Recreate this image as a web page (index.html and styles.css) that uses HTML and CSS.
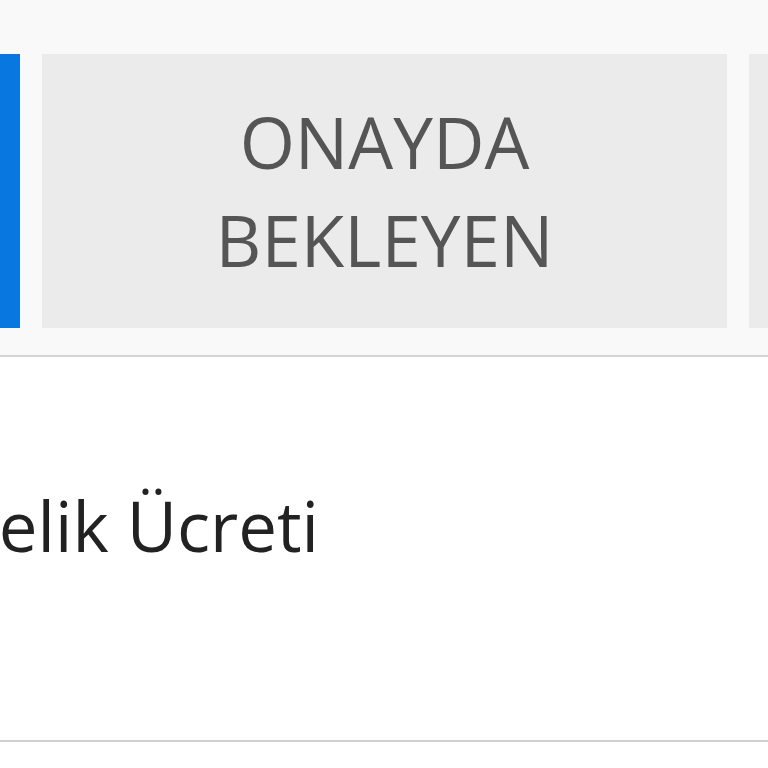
FILE: index.html
```html
<!DOCTYPE html>
<html lang="tr">
<head>
<meta charset="utf-8">
<title>Üyelik</title>
<link rel="stylesheet" href="styles.css">
</head>
<body>
<div class="tabs-area">
  <div class="tabs">
    <div class="tab tab-active">Onaylanan</div>
    <div class="tab">Onayda<br>Bekleyen</div>
    <div class="tab">Reddedilen</div>
  </div>
</div>
<div class="row">
  <span class="row-title">Üyelik Ücreti</span>
</div>
</body>
</html>
```
FILE: styles.css
```css
html, body {
  margin: 0;
  padding: 0;
  background: #ffffff;
  overflow: hidden;
  font-family: "Open Sans", "Noto Sans", sans-serif;
}
.tabs-area {
  background: #f9f9f9;
  padding: 54px 0 27px;
  border-bottom: 2px solid #d4d4d4;
}
.tabs {
  display: flex;
  gap: 22px;
  margin-left: -665px;
}
.tab {
  flex: none;
  width: 685px;
  height: 274px;
  background: #ebebeb;
  color: #555555;
  font-size: 71px;
  line-height: 98px;
  text-transform: uppercase;
  display: flex;
  align-items: center;
  justify-content: center;
  text-align: center;
}
.tab-active {
  background: #0878e0;
  color: #ffffff;
}
.row {
  background: #ffffff;
  height: 262px;
  padding-top: 121px;
  border-bottom: 2px solid #d0d0d0;
  overflow: hidden;
}
.row-title {
  display: block;
  white-space: nowrap;
  margin-left: -86px;
  font-size: 69px;
  color: #222222;
}
```
